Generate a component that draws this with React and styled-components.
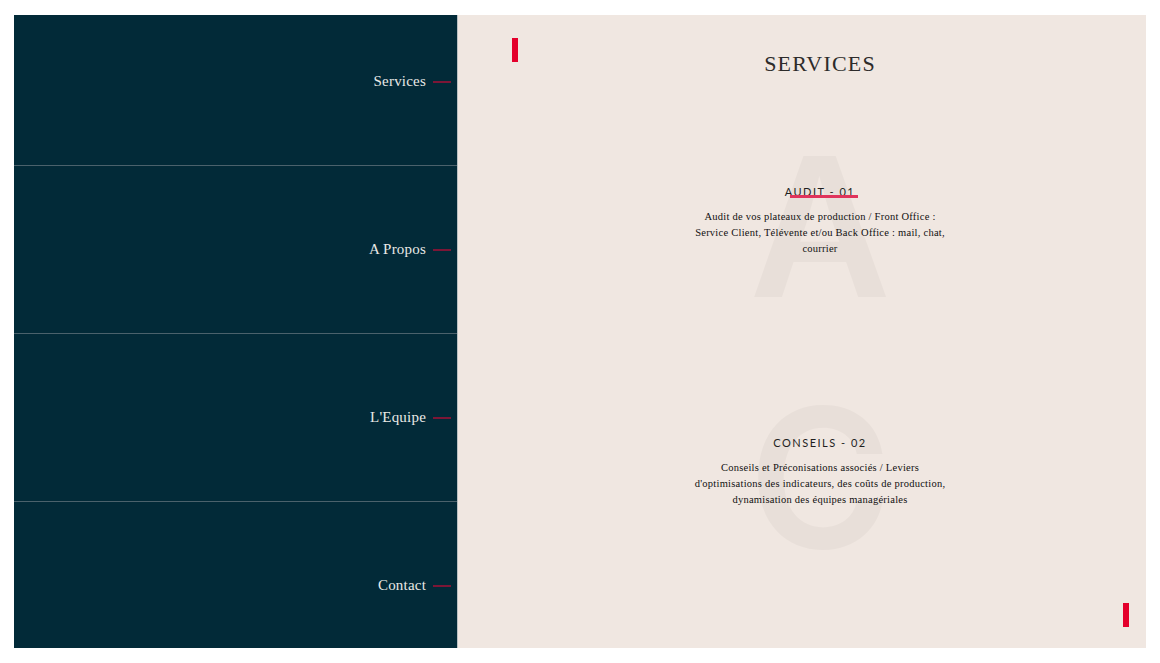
import styled, { createGlobalStyle } from 'styled-components';

const GlobalStyle = createGlobalStyle`
	html, body {
		margin: 0;
		padding: 0;
		background: #ffffff;
	}
	* {
		box-sizing: border-box;
	}
`;

const Page = styled.div`
	padding: 15px 14px;
	height: 663px;
`;

const Frame = styled.div`
	display: flex;
	height: 633px;
`;

const Nav = styled.nav`
	width: 444px;
	flex-shrink: 0;
	background: #022a38;
	overflow: hidden;
	border-right: 1px solid #b9c0c2;
`;

const NavList = styled.ul`
	list-style: none;
	margin: -17px 0 0;
	padding: 0;
`;

const NavItem = styled.li`
	height: 168px;
	padding-right: 6px;
	display: flex;
	align-items: center;
	justify-content: flex-end;
	gap: 7px;
	border-bottom: 1px solid #4b626c;

	a {
		color: #e9e9e6;
		font-family: 'Liberation Serif', 'Times New Roman', serif;
		font-size: 15px;
		letter-spacing: 0.2px;
		text-decoration: none;
	}

	span {
		flex: 0 0 18px;
		height: 2px;
		background: #7c1636;
	}
`;

const Content = styled.section`
	position: relative;
	flex: 1;
	background: #f0e7e1;
	padding: 36px 0 0 36px;
	display: flex;
	flex-direction: column;
	align-items: center;
`;

const Mark = styled.span`
	position: absolute;
	width: 6px;
	height: 24px;
	background: #e4002b;
	${(p) => (p.$corner === 'top' ? 'top: 23px; left: 54px;' : 'bottom: 21px; right: 17px;')}
`;

const Title = styled.h1`
	margin: 0;
	font-family: 'Liberation Serif', 'Times New Roman', serif;
	font-weight: 400;
	font-size: 22px;
	line-height: 26px;
	letter-spacing: 1.2px;
	color: #2d2b2a;
`;

const ServiceList = styled.div`
	margin-top: 108px;
	display: flex;
	flex-direction: column;
	align-items: center;
	gap: 179px;
`;

const Service = styled.article`
	position: relative;
	width: 252px;
	display: flex;
	flex-direction: column;
	align-items: center;
`;

const Letter = styled.span`
	position: absolute;
	top: -55px;
	left: 50%;
	transform: translateX(-50%);
	font-family: 'Inter', 'Noto Sans', sans-serif;
	font-weight: 600;
	font-size: 194px;
	line-height: 1;
	color: #e8dfd9;
	z-index: 0;
	user-select: none;
`;

const Heading = styled.h2`
	position: relative;
	z-index: 1;
	margin: 0;
	font-family: 'Lato', 'Noto Sans', sans-serif;
	font-weight: 400;
	font-size: 11px;
	line-height: 14px;
	letter-spacing: 1.5px;
	color: #1f1f1f;

	${(p) =>
		p.$underline &&
		`
		&::after {
			content: '';
			position: absolute;
			left: 5px;
			right: -3px;
			bottom: 1px;
			height: 3px;
			background: #e0345c;
		}
	`}
`;

const Text = styled.p`
	position: relative;
	z-index: 1;
	margin: 10px 0 0;
	text-align: center;
	font-family: 'Liberation Serif', 'Times New Roman', serif;
	font-size: 10.5px;
	line-height: 16px;
	letter-spacing: 0.25px;
	color: #101010;
`;

const links = ['Services', 'A Propos', "L'Equipe", 'Contact'];

const services = [
	{
		letter: 'A',
		title: 'AUDIT - 01',
		underline: true,
		text: 'Audit de vos plateaux de production / Front Office : Service Client, Télévente et/ou Back Office : mail, chat, courrier',
	},
	{
		letter: 'C',
		title: 'CONSEILS - 02',
		text: "Conseils et Préconisations associés / Leviers d'optimisations des indicateurs, des coûts de production, dynamisation des équipes managériales",
	},
];

export default function App() {
	return (
		<>
			<GlobalStyle />
			<Page>
				<Frame>
					<Nav>
						<NavList>
							{links.map((l) => (
								<NavItem key={l}>
									<a href="#">{l}</a>
									<span />
								</NavItem>
							))}
						</NavList>
					</Nav>
					<Content>
						<Mark $corner="top" />
						<Title>SERVICES</Title>
						<ServiceList>
							{services.map((s) => (
								<Service key={s.title}>
									<Letter>{s.letter}</Letter>
									<Heading $underline={s.underline}>{s.title}</Heading>
									<Text>{s.text}</Text>
								</Service>
							))}
						</ServiceList>
						<Mark $corner="bottom" />
					</Content>
				</Frame>
			</Page>
		</>
	);
}
